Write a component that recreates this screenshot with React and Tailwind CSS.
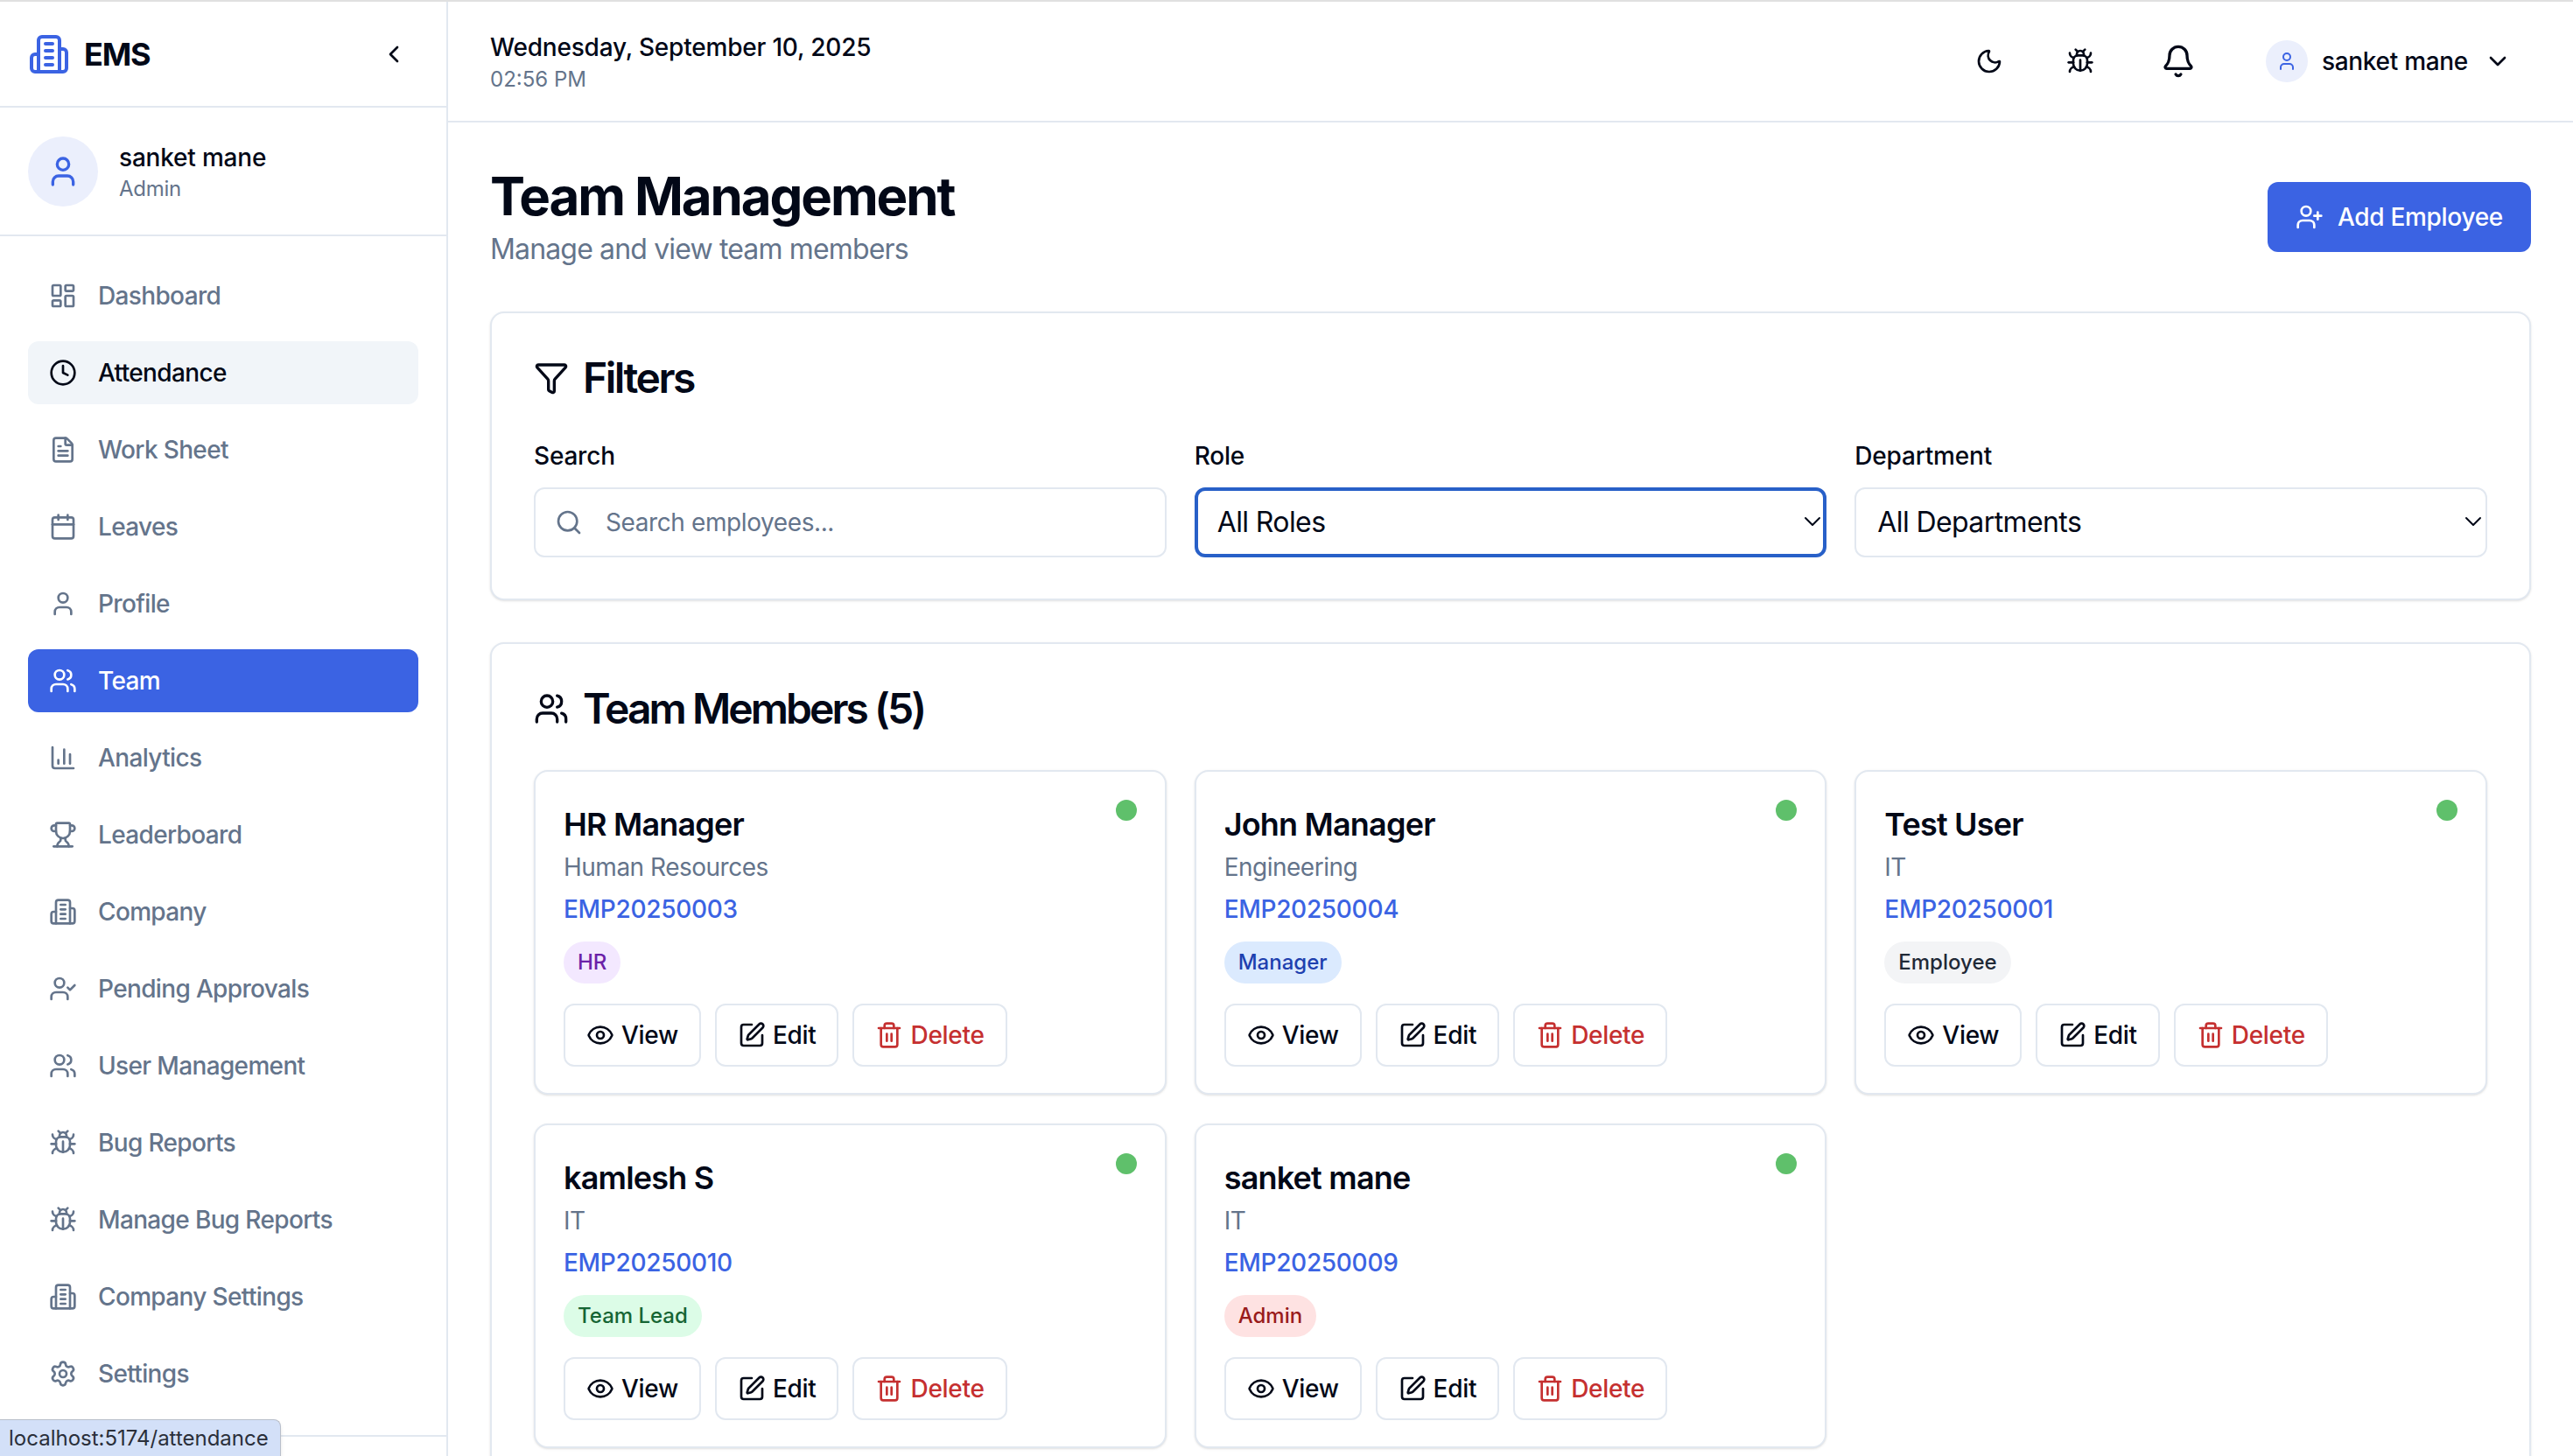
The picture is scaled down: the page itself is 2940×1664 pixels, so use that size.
import React from 'react';
import {
  LayoutDashboard, Clock, FileText, Calendar, User, Users, ChartColumn, Trophy, UserCheck, Bug, Settings,
  Moon, Bell, ChevronDown, ChevronLeft, UserPlus, Funnel, Search, Eye, SquarePen, Trash2,
} from 'lucide-react';

// lucide's older building-2 shape, the package now ships a different one
const Building = ({ size = 32, className = '' }) => (
  <svg width={size} height={size} viewBox="0 0 24 24" fill="none" stroke="currentColor" strokeWidth="2" strokeLinecap="round" strokeLinejoin="round" className={className}>
    <path d="M6 22V4a2 2 0 0 1 2-2h8a2 2 0 0 1 2 2v18Z" />
    <path d="M6 12H4a2 2 0 0 0-2 2v6a2 2 0 0 0 2 2h2" />
    <path d="M18 9h2a2 2 0 0 1 2 2v9a2 2 0 0 1-2 2h-2" />
    <path d="M10 6h4" />
    <path d="M10 10h4" />
    <path d="M10 14h4" />
    <path d="M10 18h4" />
  </svg>
);

const navItems = [
  { label: 'Dashboard', icon: LayoutDashboard },
  { label: 'Attendance', icon: Clock, hover: true },
  { label: 'Work Sheet', icon: FileText },
  { label: 'Leaves', icon: Calendar },
  { label: 'Profile', icon: User },
  { label: 'Team', icon: Users, active: true },
  { label: 'Analytics', icon: ChartColumn },
  { label: 'Leaderboard', icon: Trophy },
  { label: 'Company', icon: Building },
  { label: 'Pending Approvals', icon: UserCheck },
  { label: 'User Management', icon: Users },
  { label: 'Bug Reports', icon: Bug },
  { label: 'Manage Bug Reports', icon: Bug },
  { label: 'Company Settings', icon: Building },
  { label: 'Settings', icon: Settings },
];

const members = [
  { name: 'HR Manager', dept: 'Human Resources', id: 'EMP20250003', role: 'HR', badge: 'bg-[#f3e8ff] text-[#6b21a8]' },
  { name: 'John Manager', dept: 'Engineering', id: 'EMP20250004', role: 'Manager', badge: 'bg-[#dbeafe] text-[#1e40af]' },
  { name: 'Test User', dept: 'IT', id: 'EMP20250001', role: 'Employee', badge: 'bg-[#f3f4f6] text-[#1f2937]' },
  { name: 'kamlesh S', dept: 'IT', id: 'EMP20250010', role: 'Team Lead', badge: 'bg-[#dcfce7] text-[#166534]' },
  { name: 'sanket mane', dept: 'IT', id: 'EMP20250009', role: 'Admin', badge: 'bg-[#fee2e2] text-[#991b1b]' },
];

const Sidebar = () => (
  <aside className="w-[512px] shrink-0 flex flex-col border-r-2 border-[#e2e8f0] bg-white">
    <div className="h-[121px] shrink-0 flex items-center justify-between pl-8 pr-[44px] border-b-2 border-[#e2e8f0]">
      <div className="flex items-center gap-4">
        <Building size={48} className="text-[#3b63e3]" />
        <span className="text-[36px] font-bold tracking-[-1.2px] text-[#020817]">EMS</span>
      </div>
      <ChevronLeft size={32} className="text-[#020817]" />
    </div>
    <div className="h-[147px] shrink-0 flex items-center gap-6 px-8 border-b-2 border-[#e2e8f0]">
      <div className="w-20 h-20 rounded-full bg-[#ebeffc] flex items-center justify-center">
        <User size={40} className="text-[#3b63e3]" />
      </div>
      <div className="flex flex-col">
        <span className="text-[28px] leading-[40px] font-medium tracking-[-0.2px] text-[#020817]">sanket mane</span>
        <span className="text-[24px] leading-[32px] tracking-[-0.3px] text-[#64748b]">Admin</span>
      </div>
    </div>
    <nav className="flex-1 min-h-0 overflow-hidden flex flex-col gap-4 px-8 pt-8">
      {navItems.map(({ label, icon: Icon, active, hover }) => (
        <div
          key={label}
          className={`h-[72px] shrink-0 flex items-center gap-6 px-6 rounded-xl text-[28px] font-medium tracking-[-0.65px] ${
            active ? 'bg-[#3b63e3] text-white' : hover ? 'bg-[#f1f5f9] text-[#020817]' : 'text-[#64748b]'
          }`}
        >
          <Icon size={32} />
          <span>{label}</span>
        </div>
      ))}
    </nav>
    <div className="h-6 shrink-0 border-t-2 border-[#e2e8f0]" />
  </aside>
);

const Header = () => (
  <header className="h-[138px] shrink-0 flex items-center justify-between pl-12 pr-[70px] border-b-2 border-[#e2e8f0] bg-white">
    <div className="flex flex-col">
      <span className="text-[28px] leading-[40px] font-medium tracking-[-0.2px] text-[#020817]">Wednesday, September 10, 2025</span>
      <span className="text-[24px] leading-[32px] mt-[1px] text-[#64748b]">02:56 PM</span>
    </div>
    <div className="flex items-center text-[#020817]">
      <Moon size={32} />
      <Bug size={32} className="ml-[72px]" />
      <Bell size={40} className="ml-[76px]" />
      <div className="ml-[80px] w-12 h-12 rounded-full bg-[#ebeffc] flex items-center justify-center">
        <User size={24} className="text-[#3b63e3]" />
      </div>
      <span className="ml-4 text-[28px] font-medium tracking-[-0.3px]">sanket mane</span>
      <ChevronDown size={32} className="ml-[18px]" />
    </div>
  </header>
);

const Field = ({ label, children }) => (
  <div className="flex flex-col gap-[26px]">
    <label className="text-[28px] leading-[20px] font-medium tracking-[-0.2px] text-[#020817] mt-1.5">{label}</label>
    {children}
  </div>
);

const SelectBox = ({ value, focused }) => (
  <div className="relative">
    <select
      defaultValue={value}
      className={`w-full h-[80px] appearance-none rounded-xl bg-white text-[32px] tracking-[-0.6px] text-[#020817] outline-none ${
        focused ? 'pl-[22px] border-[4px] border-[#2860c8]' : 'pl-6 border-2 border-[#e2e8f0]'
      }`}
    >
      <option>{value}</option>
    </select>
    <ChevronDown size={32} strokeWidth={1.5} className="absolute right-0 top-[23px] text-[#020817] pointer-events-none" />
  </div>
);

const Filters = () => (
  <section className="rounded-2xl border-2 border-[#e2e8f0] bg-white shadow-sm p-12 h-[330px]">
    <div className="flex items-center gap-4 h-[52px] mb-[47px]">
      <Funnel size={40} className="text-[#020817]" />
      <h2 className="text-[48px] font-semibold tracking-[-2.5px] text-[#020817]">Filters</h2>
    </div>
    <div className="grid grid-cols-3 gap-8">
      <Field label="Search">
        <div className="relative">
          <Search size={32} className="absolute left-6 top-6 text-[#64748b]" />
          <input
            placeholder="Search employees..."
            className="w-full h-[80px] rounded-xl border-2 border-[#e2e8f0] bg-white pl-[80px] text-[28px] tracking-[-0.4px] outline-none placeholder:text-[#64748b]"
          />
        </div>
      </Field>
      <Field label="Role">
        <SelectBox value="All Roles" focused />
      </Field>
      <Field label="Department">
        <SelectBox value="All Departments" />
      </Field>
    </div>
  </section>
);

const ActionButton = ({ icon: Icon, label, danger }) => (
  <button className={`h-[72px] flex items-center gap-2 px-6 rounded-xl border-2 border-[#e2e8f0] bg-white text-[28px] font-medium tracking-[-0.3px] ${danger ? 'text-[#c53030]' : 'text-[#020817]'}`}>
    <Icon size={32} />
    {label}
  </button>
);

const MemberCard = ({ name, dept, id, role, badge }) => (
  <div className="relative h-[371px] rounded-2xl border-2 border-[#e2e8f0] bg-white shadow-sm px-8 pt-8">
    <span className="absolute right-8 top-8 w-6 h-6 rounded-full bg-[#5fc06b]" />
    <h3 className="text-[36px] leading-[56px] font-semibold tracking-[-0.8px] text-[#020817]">{name}</h3>
    <p className="text-[28px] leading-[40px] mt-[1px] tracking-[-0.5px] text-[#64748b]">{dept}</p>
    <p className="text-[28px] leading-[40px] mt-2 font-medium tracking-[-0.3px] text-[#3b63e3]">{id}</p>
    <span className={`inline-block mt-[17px] h-12 leading-[48px] px-4 rounded-full text-[24px] font-medium ${badge}`}>{role}</span>
    <div className="flex gap-4 mt-[23px]">
      <ActionButton icon={Eye} label="View" />
      <ActionButton icon={SquarePen} label="Edit" />
      <ActionButton icon={Trash2} label="Delete" danger />
    </div>
  </div>
);

const App = () => (
  <div className="relative w-screen h-screen overflow-hidden bg-white font-['Inter',sans-serif] border-t-2 border-[#e0e0e0]">
    <div className="flex h-full">
      <Sidebar />
      <main className="flex-1 min-w-0 flex flex-col">
        <Header />
        <div className="flex-1 min-h-0 overflow-hidden px-12 pt-12">
          <div className="flex items-start justify-between mb-[47px]">
            <div className="flex flex-col">
              <h1 className="text-[60px] leading-[72px] font-bold tracking-[-2.1px] text-[#020817]">Team Management</h1>
              <p className="text-[32px] leading-[48px] mt-[1px] tracking-[-0.85px] text-[#64748b]">Manage and view team members</p>
            </div>
            <button className="mt-5 h-[80px] flex items-center gap-4 px-8 rounded-xl bg-[#3b63e3] text-white text-[28px] font-medium tracking-[-0.3px]">
              <UserPlus size={32} />
              Add Employee
            </button>
          </div>
          <Filters />
          <section className="mt-12 rounded-2xl border-2 border-[#e2e8f0] bg-white shadow-sm px-12 pt-12 pb-12">
            <div className="flex items-center gap-4 h-[52px] mb-[44px]">
              <Users size={40} className="text-[#020817]" />
              <h2 className="text-[48px] font-semibold tracking-[-2.95px] text-[#020817]">Team Members (5)</h2>
            </div>
            <div className="grid grid-cols-3 gap-x-8 gap-y-[33px]">
              {members.map((m) => (
                <MemberCard key={m.id} {...m} />
              ))}
            </div>
          </section>
        </div>
      </main>
    </div>
    <div className="absolute left-0 bottom-0 w-[321px] h-[42px] pl-[10px] rounded-tr-lg border-t border-r border-[#b9bfca] bg-[#d3e0f8] shadow-md text-[24px] leading-[41px] text-[#2a2f3a]">
      localhost:5174/attendance
    </div>
  </div>
);

export default App;
